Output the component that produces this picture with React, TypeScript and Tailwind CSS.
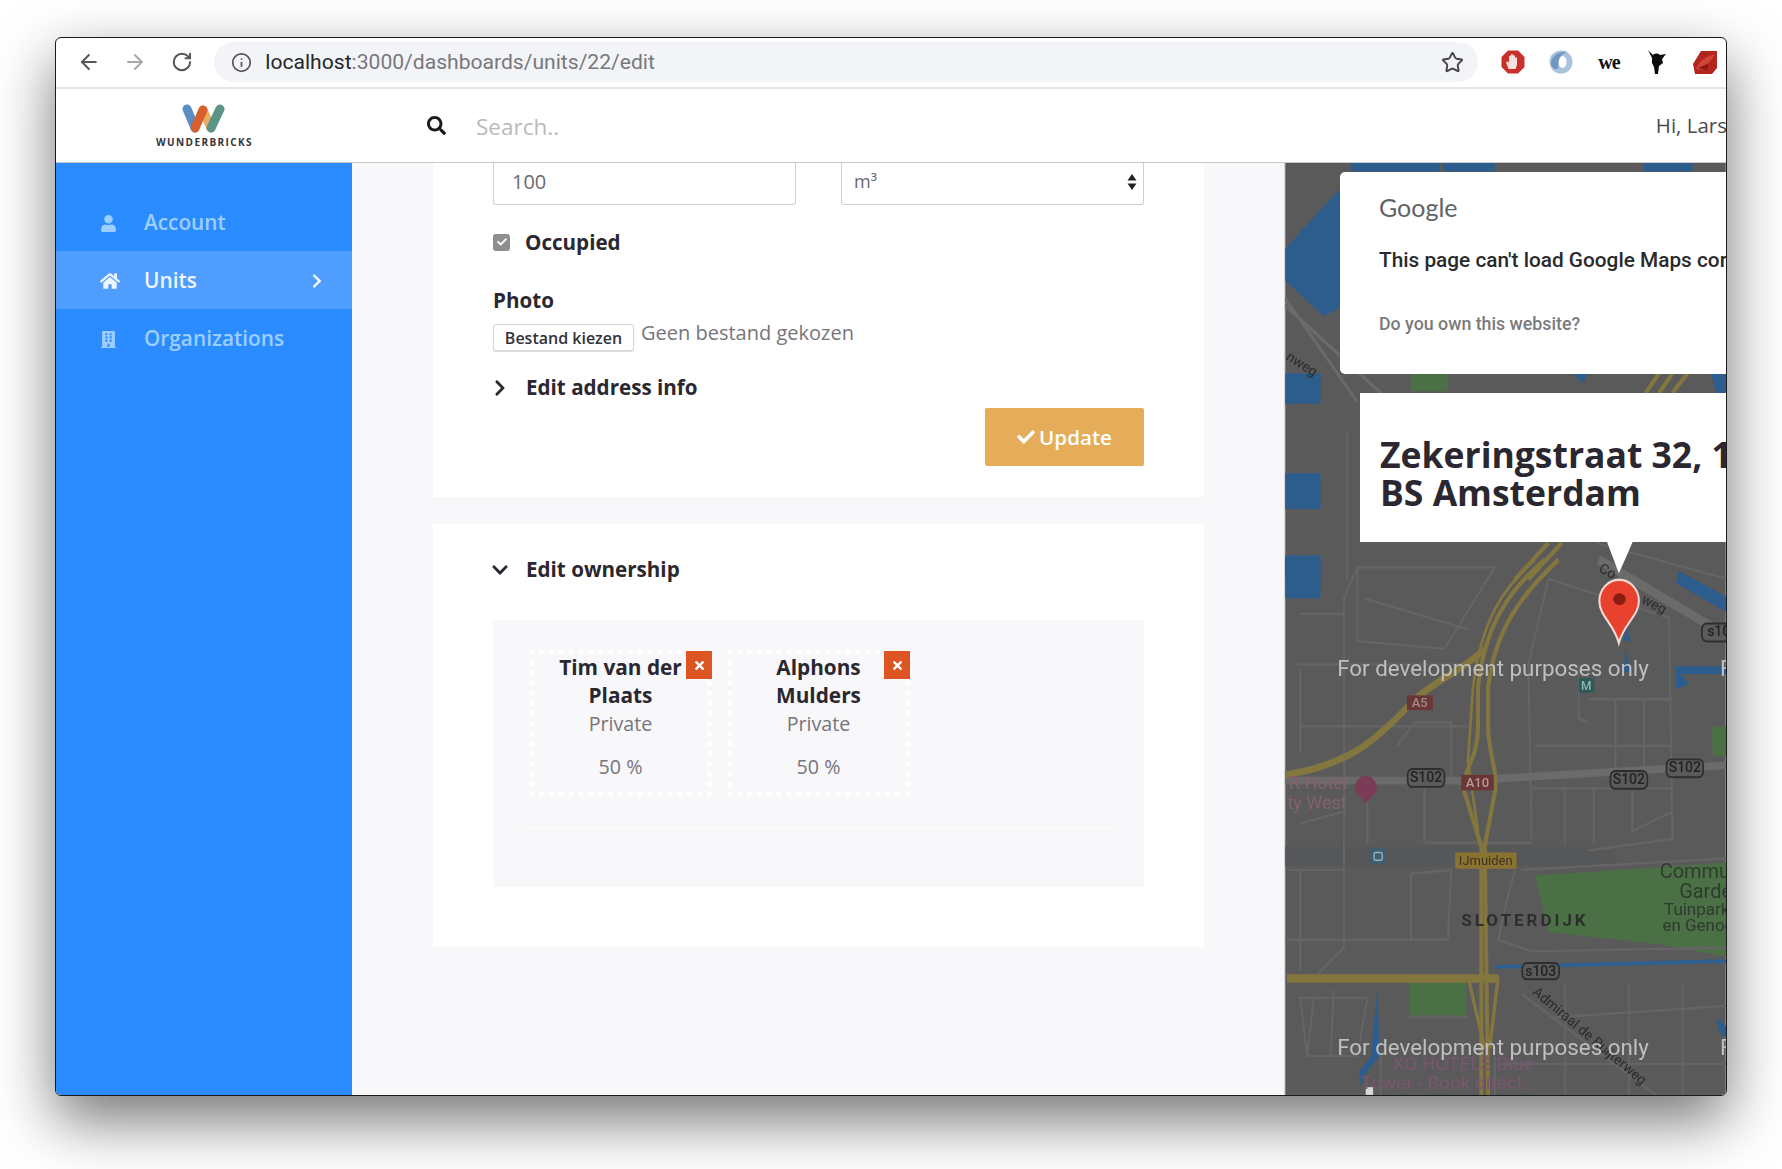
import { ArrowLeft, ArrowRight, Info, RotateCw, Star } from "lucide-react";
import { FaBuilding, FaCheck, FaChevronDown, FaChevronRight, FaHome, FaSearch, FaTimes, FaUser } from "react-icons/fa";

const px = (x: number) => 1280 + x / 2.98;
const py = (y: number) => 560 + y / 2.575;
const py2 = (y: number) => 20 + y / 2.8;

const thinRoads = [
  "M230 20 L190 100 L190 1000 L110 1070",
  "M230 20 L640 20 M230 20 L230 210 L490 230 L640 20",
  "M60 140 L190 140 M250 100 L560 180",
  "M50 270 L540 270 M60 280 L60 500 M60 430 L560 430",
  "M400 420 L510 420 L510 560 M350 480 L400 420",
  "M800 50 L740 270 L750 720 M800 50 L1160 150 L1170 720 L920 750",
  "M890 270 L890 410 L920 420 M920 360 L1170 360 M1000 360 L1000 560 M1085 360 L1085 560",
  "M760 480 L1170 480 M750 590 L1170 590 M850 590 L850 730 M935 590 L935 730 M1050 590 L1050 700 L1170 650",
  "M430 590 L430 730 M260 590 L260 730 M60 680 L190 650 M430 730 L750 730",
  "M20 800 L190 800 M60 800 L60 1060 M20 980 L500 980 M390 810 L390 980 L500 980 L510 800 L390 810",
  "M700 800 L670 900 L650 980 L750 1010 L1340 1000",
  "M720 800 L1340 770",
  "M60 1130 L260 1130 L230 1280 L80 1280 Z M100 1130 L80 1280 M160 1110 L150 1280",
  "M380 1180 L560 1180 M720 1120 L1120 1380 M850 1090 L850 1380 M1040 1090 L1040 1380 M1200 1090 L1200 1380",
  "M650 1300 L1340 1300 M820 1180 L1340 1150 M640 1280 L640 1380 M300 1280 L300 1380",
];

const shields = [
  { x: 380, y: 540, w: 110, h: 46, t: "S102" },
  { x: 985, y: 545, w: 110, h: 46, t: "S102" },
  { x: 1152, y: 515, w: 110, h: 46, t: "S102" },
  { x: 1258, y: 165, w: 100, h: 46, t: "s10" },
  { x: 722, y: 1040, w: 110, h: 42, t: "s103" },
];

function MapCanvas() {
  return (
    <svg viewBox="1285 163 441 933" className="absolute inset-0 h-full w-full blur-[0.6px]" fontFamily="Roboto, sans-serif">
      <rect x="1285" y="163" width="441" height="933" fill="#5b5a5b" />
      {/* top part, zoom coordinates */}
      <g transform={`translate(1280 20) scale(${1 / 2.98} ${1 / 2.8})`}>
        <path d="M15 640 L190 460 L190 800 L130 830 L15 730 Z" fill="#2c5d8d" />
        <rect x="210" y="400" width="265" height="24" fill="#2c5d8d" />
        <rect x="485" y="400" width="155" height="24" fill="#2c5d8d" />
        <rect x="1085" y="400" width="145" height="24" fill="#2c5d8d" />
        <rect x="15" y="990" width="105" height="85" fill="#2c5d8d" />
        <rect x="15" y="1270" width="105" height="100" fill="#2c5d8d" />
        <rect x="15" y="1500" width="105" height="70" fill="#2c5d8d" />
        <rect x="390" y="990" width="110" height="50" fill="#4c7045" />
        <path d="M870 990 H915 L905 1020 Z M1285 990 H1340 V1045 H1300 Z" fill="#2c5d8d" />
        <path d="M15 780 L230 1070 M15 800 L300 1045" stroke="#6b6a6a" strokeWidth="9" fill="none" />
        <path d="M1090 1045 L1130 990 M1130 1045 L1170 990 M1170 1045 L1215 990" stroke="#83763f" strokeWidth="12" fill="none" />
        <path d="M700 1568 L800 1465 M740 1568 L840 1465" stroke="#83763f" strokeWidth="12" fill="none" />
        <path d="M940 1465 L1340 1568 M200 1568 L200 1150" stroke="#666565" strokeWidth="6" fill="none" />
      </g>
      <g transform={`translate(1280 560) scale(${1 / 2.98} ${1 / 2.575})`} fill="none">
        <rect x="15" y="0" width="105" height="100" fill="#2c5d8d" />
        <path d="M760 815 L1340 780 V1025 L1120 990 L800 960 Z" fill="#4c7045" />
        <path d="M1285 430 H1340 V505 H1290 Z" fill="#4c7045" />
        <rect x="385" y="1090" width="170" height="85" fill="#4c7045" />
        <path d="M1190 30 L1340 100 V140 L1180 60 Z" fill="#2c5d8d" />
        <path d="M1030 170 L1045 210 L1025 210 Z M1030 230 L1045 290 L1025 290 Z M1180 275 H1340 V295 H1195 L1220 320 L1180 335 Z" fill="#2c5d8d" />
        <path d="M1300 1180 L1340 1210 V1240 L1310 1220 Z" fill="#2c5d8d" />
        <path d="M270 1280 L290 1100 L296 1280 L250 1330 L240 1360 L235 1320 Z" fill="#2c5d8d" />
        <rect x="15" y="740" width="985" height="50" fill="#565759" />
        {thinRoads.map((d) => (
          <path key={d} d={d} stroke="#666565" strokeWidth="6" />
        ))}
        <path d="M15 570 H560 M640 565 L1340 530" stroke="#6c6b6b" strokeWidth="20" />
        <path d="M950 0 L1340 200" stroke="#6c6b6b" strokeWidth="24" />
        <path d="M640 1050 L1340 1035" stroke="#2f6092" strokeWidth="10" />
        <path d="M20 1080 H650" stroke="#83763f" strokeWidth="22" />
        <path d="M790 0 C680 80 610 170 590 330 L590 430 C590 520 540 540 550 600 L600 740 L600 1380" stroke="#83763f" strokeWidth="12" />
        <path d="M830 0 C720 90 640 180 620 330 L620 430 C620 500 650 540 640 600 L610 740 L620 1380" stroke="#83763f" strokeWidth="12" />
        <path d="M760 0 C670 70 600 150 575 330 L560 520 L590 700" stroke="#83763f" strokeWidth="8" />
        <path d="M15 555 C200 530 280 470 380 380 C440 320 540 290 610 230" stroke="#83763f" strokeWidth="18" />
        <path d="M560 1075 L610 1260 M650 1075 L625 1260" stroke="#83763f" strokeWidth="10" />
        <rect x="378" y="350" width="77" height="38" fill="#6a3636" />
        <rect x="540" y="555" width="97" height="40" fill="#6a3636" />
        <rect x="522" y="755" width="183" height="42" rx="4" fill="#8a7332" />
        <rect x="890" y="305" width="47" height="38" fill="#2b5a57" />
        <rect x="268" y="745" width="47" height="40" rx="5" fill="#3f5d70" />
        <rect x="280" y="755" width="24" height="20" rx="4" fill="none" stroke="#9fb0bb" strokeWidth="4" />
        {shields.map((s) => (
          <rect key={s.x} x={s.x} y={s.y} width={s.w} height={s.h} rx="14" fill="#5b5a5b" stroke="#2e2e2e" strokeWidth="5" />
        ))}
        <path d="M255 632 C245 610 222 605 222 590 A33 33 0 0 1 288 590 C288 605 265 610 255 632 Z" fill="#7b3c58" />
        <circle cx="75" cy="1420" r="40" fill="#6e9be0" />
        <rect x="255" y="1360" width="22" height="20" fill="#d9d9d9" />
        <path d="M1010 215 C995 165 952 145 952 107 A59 55 0 0 1 1070 107 C1070 145 1025 165 1010 215 Z" fill="#e8412e" stroke="#f4d9d4" strokeWidth="6" />
        <ellipse cx="1012" cy="102" rx="19" ry="15" fill="#8a1d12" />
      </g>
      <path d="M1607 542 H1633 L1619 574 Z" fill="#fff" />

      <g fontWeight="500" fontSize="13" textAnchor="middle">
        <text x={px(416)} y={py(380)} fill="#a08a8a">A5</text>
        <text x={px(588)} y={py(586)} fill="#b59a9a">A10</text>
        <text x={px(913)} y={py(335)} fontSize="12" fill="#8fb3ad">M</text>
        <text x={px(613)} y={py(787)} fontSize="13" fontWeight="400" fill="#3a3520">IJmuiden</text>
        {shields.map((s) => (
          <text key={s.x} x={px(s.x + s.w / 2)} y={py(s.y + 33)} fontSize="14" fill="#232323">{s.t}</text>
        ))}
      </g>
      <g fill="#85606f" fontSize="18">
        <text x={px(200)} y={py(592)} textAnchor="end">R Hotel</text>
        <text x={px(198)} y={py(642)} textAnchor="end">ty West</text>
      </g>
      <g fill="#2f3a2e">
        <text x={px(1132)} y={py(822)} fontSize="20">Commu</text>
        <text x={px(1190)} y={py(872)} fontSize="20">Garde</text>
        <text x={px(1145)} y={py(917)} fontSize="17">Tuinpark</text>
        <text x={px(1140)} y={py(958)} fontSize="17">en Genoe</text>
      </g>
      <text x={px(540)} y={py(945)} fontSize="17" fontWeight="700" letterSpacing="3" fill="#2e2e2e">SLOTERDIJK</text>
      <text
        x={px(750)}
        y={py(1118)}
        fontSize="14"
        fill="#2b2b2b"
        transform={`rotate(40 ${px(750)} ${py(1118)})`}
      >
        Admiraal de Ruijterweg
      </text>
      <text x={px(948)} y={py(30)} fontSize="14" fill="#2b2b2b" transform={`rotate(28 ${px(948)} ${py(30)})`}>Co</text>
      <text x={px(1075)} y={py(110)} fontSize="14" fill="#2b2b2b" transform={`rotate(28 ${px(1075)} ${py(110)})`}>weg</text>
      <text x={1285} y={py2(950)} fontSize="14" fill="#2b2b2b" transform={`rotate(32 1285 ${py2(950)})`}>nweg</text>
      <g fill="#7a5570" fontSize="19">
        <text x={px(335)} y={py(1315)}>XO HOTELS Blue</text>
        <text x={px(240)} y={py(1365)}>Tower - Book direct...</text>
      </g>
      <g fill="#bfbfbf" fontSize="22.4">
        <text x={px(170)} y={py(300)}>For development purposes only</text>
        <text x={px(170)} y={py(1277)}>For development purposes only</text>
        <text x={px(1312)} y={py(300)}>F</text>
        <text x={px(1312)} y={py(1277)}>F</text>
      </g>
    </svg>
  );
}

function Logo() {
  return (
    <div className="flex flex-col items-center">
      <svg width="44" height="30" viewBox="0 0 44 30" fill="none" strokeLinecap="round">
        <path d="M5 5 L13 24" stroke="#5b8fc4" strokeWidth="9" />
        <path d="M21 6 L29 24" stroke="#e5b062" strokeWidth="9" />
        <path d="M13 24 L21 6" stroke="#d9602c" strokeWidth="9" />
        <path d="M29 24 L38 5" stroke="#5c9488" strokeWidth="9" />
      </svg>
      <span className="mt-[2px] text-[10px] font-bold leading-[12px] tracking-[1.4px] text-[#36333a]">WUNDERBRICKS</span>
    </div>
  );
}

function Extensions() {
  return (
    <div className="ml-[22px] flex items-center gap-[22px]">
      <svg width="26" height="26" viewBox="0 0 26 26">
        <path d="M8 1.5 H18 L24.5 8 V18 L18 24.5 H8 L1.5 18 V8 Z" fill="#c9302c" />
        <path d="M8.5 20 L6 13 L8 12.5 L9 14 V7.5 A1 1 0 0 1 11 7.5 V6 A1 1 0 0 1 13 6 V7 A1 1 0 0 1 15 7.5 V9 A1 1 0 0 1 17 9.5 V16 L15.5 20 Z" fill="#f6e2dc" />
      </svg>
      <svg width="26" height="26" viewBox="0 0 26 26">
        <ellipse cx="13" cy="13" rx="11.5" ry="11.5" fill="#a9c2de" />
        <ellipse cx="14.5" cy="13" rx="4" ry="6" fill="#fff" />
        <path d="M3 15 C3 7 11 1.5 20 3 C13 4 9.5 10 10.5 19 C8 21.5 4 20 3 15 Z" fill="#6f97c2" />
      </svg>
      <span className="flex w-[26px] justify-center font-['Liberation_Serif',serif] text-[20px] font-bold leading-[26px] tracking-[-1px] text-[#111]">
        we
      </span>
      <svg width="26" height="26" viewBox="0 0 26 26">
        <path d="M4 1 L9 6 C11 4 14 4 16 6 L22 5 L18 10 L19 14 L15 17 L14 25 L11 25 L10 18 L8 14 L8 9 Z" fill="#0d0d0d" />
      </svg>
      <svg width="26" height="26" viewBox="0 0 26 26">
        <path d="M9 2 H25 V19 L20 25 H3 L1 15 Z" fill="#b3261e" />
        <path d="M4 20 C7 12 13 8 23 5 L17 14 L15 22" fill="#d0443a" />
        <path d="M6 19 L15 22 L17 14 Z" fill="#8f1a14" />
      </svg>
    </div>
  );
}

function SideItem({ icon, label, active }: { icon: React.ReactNode; label: string; active?: boolean }) {
  return (
    <div
      className={
        active
          ? "flex h-[58px] items-center bg-[#4f9eff] pl-[44px] pr-[27px] pt-[2px] text-[#eef6ff]"
          : "flex h-[58px] items-center pl-[44px] pr-[27px] pt-[2px] text-[#9ccfff]"
      }
    >
      <span className="flex w-[44px] shrink-0 items-center text-[18px]">{icon}</span>
      <span className="text-[20.8px] font-semibold">{label}</span>
      {active && <FaChevronRight className="ml-auto text-[16px]" />}
    </div>
  );
}

function Owner({ lines }: { lines: string[] }) {
  return (
    <div className="relative h-[147px] w-[183px] border-[5px] border-dotted border-white text-center">
      <div className="-mt-[2px] text-[20.8px] leading-[28px] font-bold text-[#2b2730]">
        {lines.map((l) => (
          <div key={l}>{l}</div>
        ))}
      </div>
      <p className="text-[19.7px] leading-[29px] text-[#77757a]">Private</p>
      <p className="mt-[15px] text-[19.7px] leading-[28px] text-[#77757a]">50 %</p>
      <div className="absolute -right-[5px] -top-[4px] flex h-[28px] w-[26px] items-center justify-center bg-[#dd5522] text-[13px] text-white">
        <FaTimes />
      </div>
    </div>
  );
}

export default function App() {
  return (
    <div className="h-[1169px] w-[1782px] overflow-hidden bg-white pl-[55px] pt-[37px] font-['Open_Sans',sans-serif]">
      <div className="flex h-[1059px] w-[1672px] flex-col overflow-hidden rounded-[6px] border border-[#1b1b1b] bg-white shadow-[0_24px_60px_rgba(0,0,0,0.55)]">
        {/* browser toolbar */}
        <div className="flex h-[51px] shrink-0 items-center border-b-2 border-[#e6e6e8] pb-[1px] pl-[21px] pr-[8px]">
          <ArrowLeft className="h-[24px] w-[24px] text-[#55565a]" strokeWidth={2} />
          <ArrowRight className="ml-[22px] h-[24px] w-[24px] text-[#a9a9ad]" strokeWidth={2} />
          <RotateCw className="ml-[24px] h-[22px] w-[22px] text-[#55565a]" strokeWidth={2.2} />
          <div className="ml-[22px] flex h-[40px] w-[1276px] items-center rounded-full bg-[#f3f4f7] pl-[17px] pr-[14px]">
            <Info className="h-[21px] w-[21px] text-[#55565a]" strokeWidth={2} />
            <span className="ml-[13px] font-['Roboto',sans-serif] text-[21.1px] text-[#77787c]">
              <span className="text-[#26272a]">localhost</span>:3000/dashboards/units/22/edit
            </span>
            <Star className="ml-auto h-[23px] w-[23px] text-[#44454a]" strokeWidth={2} />
          </div>
          <Extensions />
        </div>

        {/* app header */}
        <div className="flex h-[74px] shrink-0 items-center border-b border-[#c9c9cb] bg-white">
          <div className="flex w-[297px] shrink-0 justify-center">
            <Logo />
          </div>
          <FaSearch className="ml-[74px] text-[19px] text-[#1c1c20]" />
          <span className="ml-[30px] pt-[2px] text-[22.5px] text-[#b9b9bd]">Search..</span>
          <span className="ml-auto -mr-[1px] whitespace-nowrap text-[20.5px] text-[#4b4a50]">Hi, Lars</span>
        </div>

        <div className="flex min-h-0 flex-1">
          {/* sidebar */}
          <div className="w-[296px] shrink-0 bg-[#2b8cff] pt-[30px]">
            <SideItem icon={<FaUser className="text-[17px]" />} label="Account" />
            <SideItem icon={<FaHome className="text-[20px]" />} label="Units" active />
            <SideItem icon={<FaBuilding className="text-[17px]" />} label="Organizations" />
          </div>

          {/* form column */}
          <div className="w-[932px] shrink-0 overflow-hidden bg-[#f8f7fa] pl-[81px] text-[#2b2730]">
            <div className="w-[771px] bg-white px-[60px] pb-[31px]">
              <div className="flex gap-[45px]">
                <div className="flex h-[42px] w-[303px] items-center rounded-b-[3px] border border-t-0 border-[#cfcfd2] pb-[4px] pl-[18px] text-[20px] text-[#6a696e]">
                  100
                </div>
                <div className="flex h-[42px] w-[303px] items-center rounded-b-[3px] border border-t-0 border-[#cfcfd2] pb-[4px] pl-[12px] pr-[6px] text-[18px] text-[#6a696e]">
                  m³
                  <svg className="ml-auto" width="10" height="18" viewBox="0 0 10 18" fill="#222">
                    <path d="M5 1 L9.5 7.5 H0.5 Z M5 17 L0.5 10.5 H9.5 Z" />
                  </svg>
                </div>
              </div>
              <div className="mt-[24px] flex h-[26px] items-center">
                <div className="flex h-[17px] w-[17px] items-center justify-center rounded-[3px] bg-[#8e8e90] text-[10px] text-white">
                  <FaCheck />
                </div>
                <span className="ml-[15px] text-[20.6px] font-bold">Occupied</span>
              </div>
              <p className="mt-[32px] text-[20.6px] leading-[26px] font-bold">Photo</p>
              <div className="mt-[11px] flex items-start">
                <div className="flex h-[27px] w-[141px] items-center justify-center rounded-[3px] border border-[#d5d5d8] bg-white text-[16px] font-semibold text-[#33323a] shadow-[0_1px_1px_rgba(0,0,0,0.15)]">
                  Bestand kiezen
                </div>
                <span className="-mt-[4px] ml-[7px] text-[20px] leading-[26px] text-[#77757a]">Geen bestand gekozen</span>
              </div>
              <div className="mt-[23px] flex h-[27px] items-center">
                <FaChevronRight className="-ml-[2px] text-[18px] text-[#2b2730]" />
                <span className="ml-[17px] text-[20.6px] font-bold">Edit address info</span>
              </div>
              <div className="mt-[7px] flex justify-end">
                <div className="flex h-[58px] w-[159px] items-center justify-center gap-[4px] rounded-[2px] bg-[#e5ac5a] text-[20.6px] font-semibold text-white">
                  <FaCheck className="text-[18px]" />
                  Update
                </div>
              </div>
            </div>

            <div className="mt-[27px] w-[771px] bg-white px-[60px] pb-[60px] pt-[32px]">
              <div className="flex h-[27px] items-center">
                <FaChevronDown className="-ml-[2px] text-[18px] text-[#2b2730]" />
                <span className="ml-[17px] text-[20.6px] font-bold">Edit ownership</span>
              </div>
              <div className="mt-[37px] h-[267px] bg-[#f8f7fa] px-[33px] pt-[30px]">
                <div className="ml-[3px] flex gap-[15px]">
                  <Owner lines={["Tim van der", "Plaats"]} />
                  <Owner lines={["Alphons", "Mulders"]} />
                </div>
                <div className="mt-[31px] h-px bg-white" />
              </div>
            </div>
          </div>

          {/* map */}
          <div className="relative min-w-0 flex-1 overflow-hidden border-l border-[#d8d8da]">
            <MapCanvas />
            <div className="absolute left-[55px] top-[9px] h-[202px] w-[500px] rounded-[5px] bg-white pl-[39px] pt-[20px] font-['Roboto',sans-serif]">
              <p className="font-['Lato',sans-serif] text-[25px] leading-[30px] text-[#5f6368]">Google</p>
              <p className="mt-[24px] whitespace-nowrap text-[20.8px] leading-[28px] font-medium text-[#2a2a2c]">
                This page can't load Google Maps correctly.
              </p>
              <p className="mt-[39px] text-[17.8px] leading-[22px] font-medium text-[#7a7a7e]">Do you own this website?</p>
            </div>
            <div className="absolute left-[75px] top-[230px] h-[149px] w-[500px] bg-white pl-[20px] pt-[42px] text-[35.5px] leading-[38px] font-bold text-[#2b2730]">
              <div className="whitespace-nowrap">Zekeringstraat 32, 1014</div>
              <div className="whitespace-nowrap">BS Amsterdam</div>
            </div>
          </div>
        </div>
      </div>
    </div>
  );
}
